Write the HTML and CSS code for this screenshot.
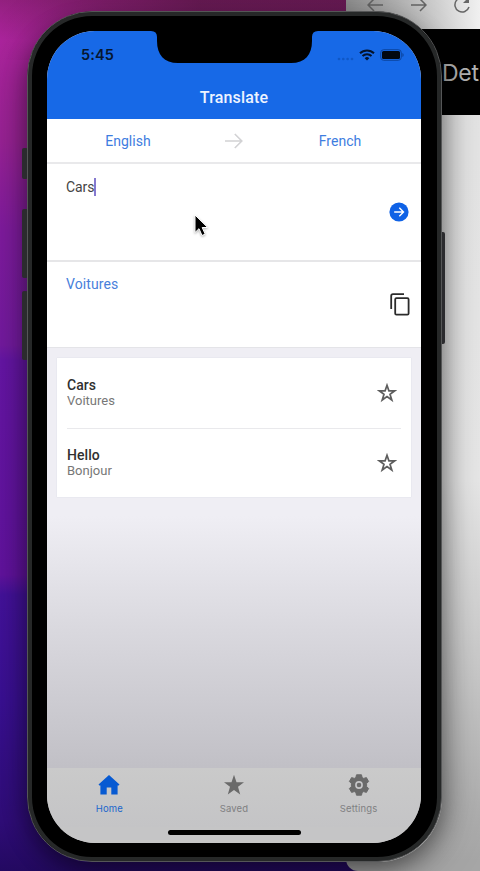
FILE: index.html
```html
<!DOCTYPE html>
<html lang="en">
<head>
<meta charset="utf-8">
<title>Translate</title>
<link rel="stylesheet" href="styles.css">
</head>
<body>
<main class="desktop">
  <div class="window">
    <div class="window-toolbar">
      <svg width="17" height="14" viewBox="0 0 17 14"><path d="M16 7H1M7 1 1 7l6 6"/></svg>
      <svg width="17" height="14" viewBox="0 0 17 14"><path d="M1 7h15M10 1l6 6-6 6"/></svg>
      <svg width="18" height="18" viewBox="0 0 18 18"><path d="M14.500 4A7.200 7.200 0 1 0 16 11"/><path d="M16 1v6h-6z" fill="#666" stroke="none"/></svg>
    </div>
    <div class="window-banner">Det</div>
  </div>

  <div class="phone-shadow"></div>
  <i class="side-key mute"></i>
  <i class="side-key vol-up"></i>
  <i class="side-key vol-down"></i>
  <i class="side-key power"></i>

  <div class="phone">
    <div class="screen">
      <header class="header">
        <div class="status">
          <span class="time">5:45</span>
          <span class="status-icons">
            <svg width="17" height="4" viewBox="0 0 17 4" fill="#0f57c6"><circle cx="2" cy="2" r="1.3"/><circle cx="6.300" cy="2" r="1.300"/><circle cx="10.600" cy="2" r="1.300"/><circle cx="15" cy="2" r="1.300"/></svg>
            <svg class="wifi" width="16" height="12" viewBox="0 0 16 12" fill="none" stroke="#04132b" stroke-width="2"><path d="M1 4.300a10 10 0 0 1 14 0M3.500 7a6.500 6.500 0 0 1 9 0"/><path d="M8 11.600 5.700 9.200a3.200 3.200 0 0 1 4.600 0z" fill="#04132b" stroke="none"/></svg>
            <svg class="battery" width="24" height="12" viewBox="0 0 24 12"><rect x=".7" y=".7" width="20.600" height="10.600" rx="3" fill="none" stroke="#0c45a0"/><rect x="2" y="2" width="18" height="8" rx="1.600" fill="#020812"/><path d="M22.400 4v4q1.300-.6 1.300-2t-1.300-2" fill="#0c45a0"/></svg>
          </span>
        </div>
        <h1 class="title">Translate</h1>
        <div class="notch"><svg width="167" height="32" viewBox="0 0 167 32"><path d="M0 0h167Q161 0 161 6v4c0 14-7 22-21 22H27C13 32 6 24 6 10V6Q6 0 0 0z" fill="#000"/></svg></div>
      </header>

      <section class="languages">
        <span>English</span>
        <svg width="18" height="16" viewBox="0 0 18 16" fill="none" stroke="#d2d2d4" stroke-width="1.600"><path d="M0 8h16.500M9.800 1l7 7-7 7"/></svg>
        <span>French</span>
      </section>

      <section class="input">
        <span class="typed">Cars</span>
        <svg class="submit" width="20" height="20" viewBox="0 0 20 20"><circle cx="10" cy="10" r="9.600" fill="#0f62e6"/><path d="M5.200 10h9M10.300 5.800l4.200 4.200-4.200 4.200" fill="none" stroke="#fff" stroke-width="1.400"/></svg>
      </section>

      <section class="output">
        <span>Voitures</span>
        <svg class="copy" width="20" height="23" viewBox="0 0 20 23" fill="none" stroke="#2b2b2b" stroke-width="1.800"><path d="M14 1.200H3Q1.200 1.200 1.200 3v13"/><rect x="5.200" y="5.200" width="13.400" height="16.400" rx="1.200"/></svg>
      </section>

      <section class="history">
        <article class="entry">
          <div><h2>Cars</h2><p>Voitures</p></div>
          <svg width="20" height="20" viewBox="0 0 20 20"><path d="M10 2.300l1.900 5.500h5.800L13 11.300l1.800 5.700-4.800-3.500L5.200 17 7 11.300 2.300 7.800h5.800z"/></svg>
        </article>
        <article class="entry">
          <div><h2>Hello</h2><p>Bonjour</p></div>
          <svg width="20" height="20" viewBox="0 0 20 20"><path d="M10 2.300l1.900 5.500h5.800L13 11.300l1.800 5.700-4.800-3.500L5.200 17 7 11.300 2.300 7.800h5.800z"/></svg>
        </article>
      </section>

      <nav class="tabs">
        <div class="tab active">
          <svg width="22" height="22" viewBox="0 0 22 22"><path d="M11 1 21.500 10.500 20.600 11.600H19.600V20.500H13.300V13.500H8.700V20.500H2.400V11.600H1.400L.5 10.500z"/></svg>
          <span>Home</span>
        </div>
        <div class="tab">
          <svg width="22" height="22" viewBox="0 0 22 22"><path d="M11 .8l2.500 7.400h7.500l-6 4.600 2.200 7.700L11 16l-6.200 4.500L7 12.800 1 8.200h7.500z"/></svg>
          <span>Saved</span>
        </div>
        <div class="tab">
          <svg width="22" height="22" viewBox="0 0 22 22"><path stroke="#6a6a6a" stroke-linejoin="round" d="M8.500.8h5l.6 2.700 1.600.9 2.700-.8 2.200 3.900-2 2v3l2 2-2.200 3.900-2.700-.8-1.600.9-.6 2.700h-5l-.6-2.700-1.600-.9-2.700.8-2.200-3.900 2-2v-3l-2-2 2.200-3.900 2.700.8 1.600-.9z"/><circle cx="11" cy="11" r="3.100" fill="#6a6a6a" stroke="#c6c6c8" stroke-width="1.600"/></svg>
          <span>Settings</span>
        </div>
      </nav>
      <div class="home-bar"></div>
    </div>
  </div>

  <svg class="cursor" width="16" height="24" viewBox="0 0 16 24"><path d="M1 1v17.500l4-3.800 3 6.800 3.200-1.400-3-6.600h5.500z" fill="#000" stroke="#fff" stroke-width="1"/></svg>
</main>
</body>
</html>
```
FILE: styles.css
```css
* { box-sizing: border-box; margin: 0; }
body { width: 480px; height: 871px; overflow: hidden; font-family: Roboto, sans-serif; }
svg { display: block; }

.desktop {
  position: relative;
  width: 480px;
  height: 871px;
  overflow: hidden;
  background:
    linear-gradient(90deg, transparent, rgba(50, 20, 30, .45) 200px) top / 100% 60px no-repeat,
    linear-gradient(#93207f, #ac249d 40px, #9a2396 140px, #801c9f 230px, #741ba0 345px, #6616a6 360px, #62139f 575px, #44129c 595px, #3a1094 700px, #300d7a 820px, #240a62);
}

.window {
  position: absolute;
  left: 346px;
  top: -20px;
  width: 134px;
  height: 891px;
  border-radius: 0 0 0 12px;
  overflow: hidden;
  background: linear-gradient(#e6e6e6, #e9e9e9 500px, #c8c8c8 700px, #a6a6a6 880px);
}
.window-toolbar {
  display: flex;
  align-items: center;
  gap: 26px;
  height: 49px;
  padding-left: 21px;
  background: linear-gradient(90deg, #909090, #f0f0f0 134px);
}
.window-toolbar svg { flex: none; fill: none; stroke: #666; stroke-width: 1.5; }
.window-banner {
  height: 86px;
  padding-left: 96px;
  background: #000;
  color: #b5b5b5;
  font: 23px/88px Inter, sans-serif;
  letter-spacing: -.3px;
}

.phone-shadow {
  position: absolute;
  left: 28px;
  top: 20px;
  width: 414px;
  height: 842px;
  border-radius: 64px;
  box-shadow: 0 6px 24px rgba(0, 0, 0, .45), 0 4px 50px rgba(0, 0, 0, .3);
}
.side-key { position: absolute; width: 6px; background: #2b2b2e; border-radius: 2px; }
.mute { left: 22px; top: 148px; height: 31px; }
.vol-up { left: 22px; top: 209px; height: 69px; }
.vol-down { left: 22px; top: 291px; height: 69px; }
.power { left: 439px; top: 232px; height: 112px; }

.phone {
  position: absolute;
  left: 27px;
  top: 11px;
  width: 415px;
  height: 851px;
  padding: 14px;
  border: 1px solid #555657;
  border-radius: 65px;
  background: #000;
  box-shadow: inset 0 0 0 4px #262828;
}
.screen {
  display: flex;
  flex-direction: column;
  width: 374px;
  height: 812px;
  margin: 5px 5px 0;
  border-radius: 48px;
  overflow: hidden;
  background: linear-gradient(#efeef4, #efeef4 485px, #d9d8de 600px, #c1c0c6 736px);
}

.header { position: relative; height: 88px; background: #1769e7; }
.status { display: flex; justify-content: space-between; padding: 16px 17px 0 34px; height: 50px; }
.time { color: #06162e; font: 600 14.5px/16px Inter, sans-serif; letter-spacing: .1px; }
.status-icons { display: flex; height: 16px; gap: 5px; }
.status-icons svg:first-child { margin-top: 10px; }
.wifi { margin-top: 2px; }
.battery { margin-top: 2px; }
.title { text-align: center; color: #eef4ff; font-size: 16px; line-height: 34px; font-weight: 500; letter-spacing: .15px; }
.notch { position: absolute; left: 103.5px; top: 0; }

.languages {
  display: grid;
  grid-template-columns: 1fr 50px 1fr;
  place-items: center;
  height: 45px;
  border-bottom: 2px solid #e9e9eb;
  background: #fff;
  color: #3e7de0;
  font-size: 14px;
  letter-spacing: .03px;
}
.input, .output { display: flex; justify-content: space-between; align-items: flex-start; font-size: 14px; line-height: 18px; letter-spacing: .1px; background: #fff; }
.input { height: 98px; padding: 14px 12px 0 19px; border-bottom: 2px solid #e6e6e8; color: #444; }
.typed { border-right: 2px solid #8579cf; margin-right: 4px; letter-spacing: -.1px; }
.submit { margin-top: 24px; }
.output { height: 86px; padding: 13px 11px 0 19px; border-bottom: 1px solid #e4e4e8; color: #4880db; }
.copy { margin-top: 18px; }

.history { margin: 10px 10px 0; padding: 0 10px; background: #fff; height: 139px; box-shadow: 0 0 1px #cfced8; }
.entry { display: flex; justify-content: space-between; align-items: flex-start; height: 70px; padding: 19px 4px 0 0; }
.entry + .entry { border-top: 1px solid #e9e9ec; padding-top: 18px; }
.entry h2 { color: #303030; font-size: 14px; line-height: 16px; font-weight: 500; letter-spacing: .05px; }
.entry p { color: #777; font-size: 13px; line-height: 16px; letter-spacing: 0; }
.entry svg { margin-top: 6px; fill: none; stroke: #5d5d5d; stroke-width: 1.7; }

.tabs { display: grid; grid-template-columns: repeat(3, 1fr); height: 59px; margin-top: auto; background: linear-gradient(#cacaca, #c4c4c6); }
.tab { display: flex; flex-direction: column; align-items: center; gap: 7px; padding-top: 6px; color: #808082; font: 9.5px/12px Inter, sans-serif; letter-spacing: .15px; }
.tab svg { fill: #6a6a6a; }
.active { color: #1b67cc; }
.active svg { fill: #075ad2; }
.home-bar { height: 16px; background: #c5c5c6; }
.home-bar::before { content: ""; display: block; width: 133px; height: 5px; margin: 0 auto; position: relative; top: 3px; border-radius: 3px; background: #000; }

.cursor { position: absolute; left: 194px; top: 214px; filter: drop-shadow(0 1px 1px rgba(0, 0, 0, .3)); }
```
